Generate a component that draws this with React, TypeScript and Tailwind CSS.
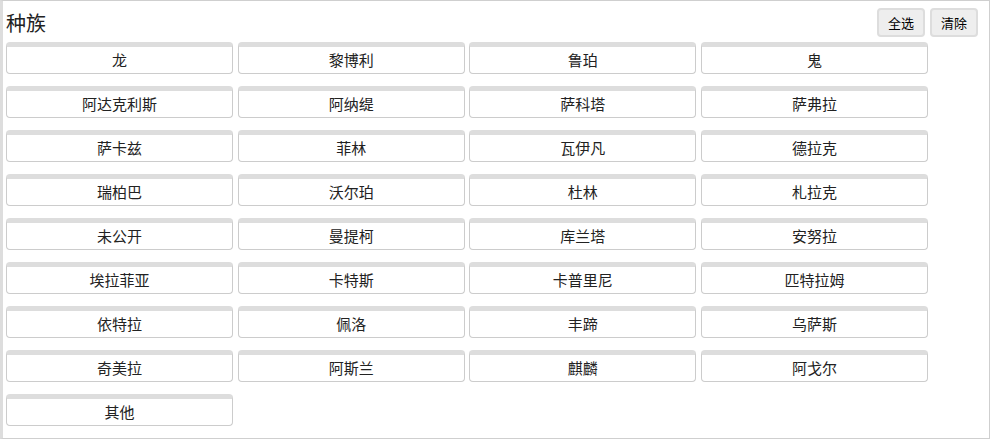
import React from 'react';

const races = [
  '龙', '黎博利', '鲁珀', '鬼',
  '阿达克利斯', '阿纳缇', '萨科塔', '萨弗拉',
  '萨卡兹', '菲林', '瓦伊凡', '德拉克',
  '瑞柏巴', '沃尔珀', '杜林', '札拉克',
  '未公开', '曼提柯', '库兰塔', '安努拉',
  '埃拉菲亚', '卡特斯', '卡普里尼', '匹特拉姆',
  '依特拉', '佩洛', '丰蹄', '乌萨斯',
  '奇美拉', '阿斯兰', '麒麟', '阿戈尔',
  '其他',
];

const font = { fontFamily: '"Noto Sans CJK SC", "Noto Sans", sans-serif' };

export default function App() {
  return (
    <div
      className="w-[990px] h-[439px] bg-white border-t border-r border-b border-[#cfcfcf] border-l-[3px] border-l-[#dddddd] pl-[3px] pr-[11px] text-[#222]"
      style={font}
    >
      <div className="flex items-start justify-between pt-[7px] h-[41px]">
        <h2 className="text-[20px] leading-[28px] mt-[1px]">种族</h2>
        <div className="flex gap-[5px]">
          <button className="w-[48px] h-[29px] bg-[#eeeeee] border-2 border-[#dddddd] rounded text-[13px] text-black">全选</button>
          <button className="w-[48px] h-[29px] bg-[#eeeeee] border-2 border-[#dddddd] rounded text-[13px] text-black">清除</button>
        </div>
      </div>
      {/* race list */}
      <div className="grid grid-cols-[repeat(4,227px)] gap-x-[4.67px] gap-y-[12px]">
        {races.map((r) => (
          <button
            key={r}
            className="h-[32px] bg-white border border-[#cccccc] border-t-[5px] border-t-[#dddddd] rounded-[4px] text-[15px] leading-none pb-[1px]"
          >
            {r}
          </button>
        ))}
      </div>
    </div>
  );
}
